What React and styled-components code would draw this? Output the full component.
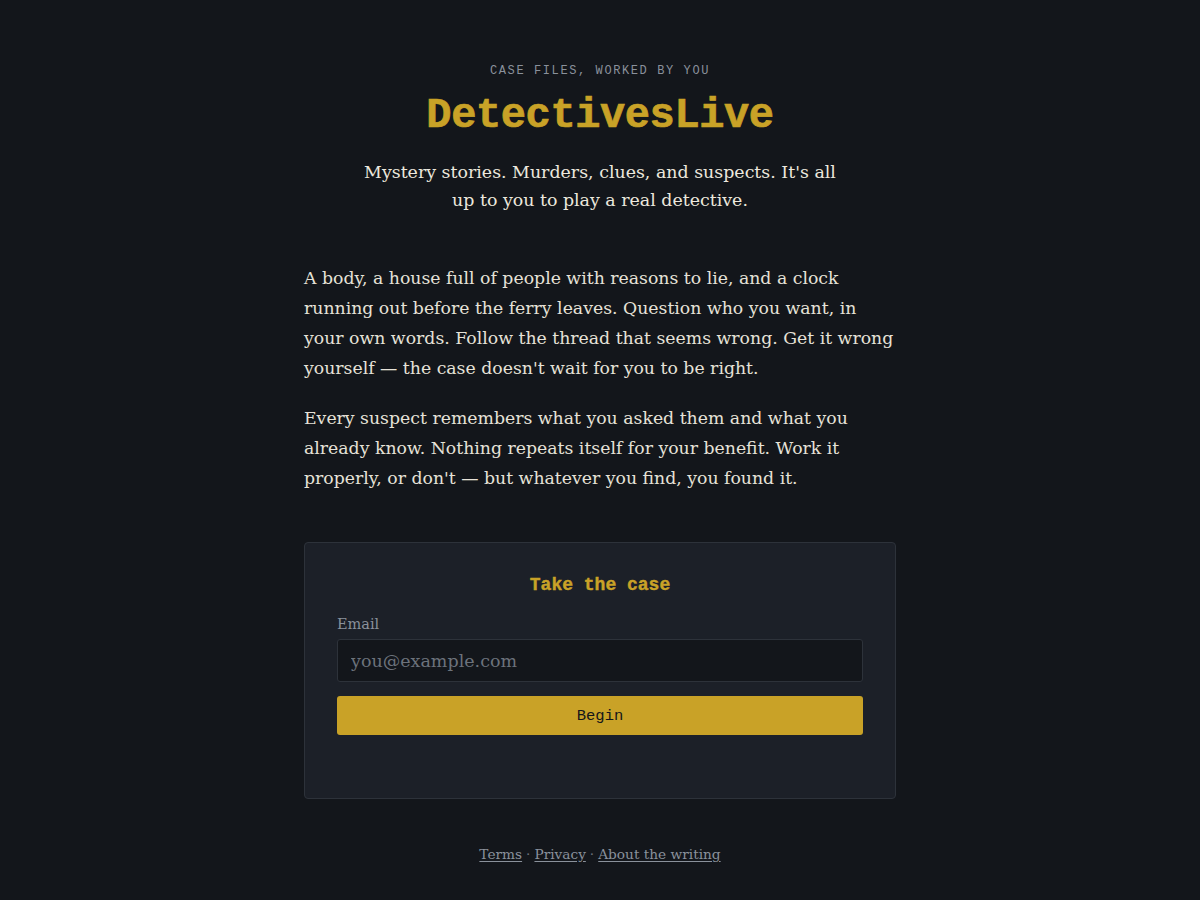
import React from 'react'
import styled, { createGlobalStyle } from 'styled-components'

const serif = `"DejaVu Serif", "Liberation Serif", serif`
const mono = `"Liberation Mono", "DejaVu Sans Mono", monospace`

const GlobalStyle = createGlobalStyle`
  html, body {
    margin: 0;
    padding: 0;
    background: #13161b;
  }
  body {
    font-family: ${serif};
    color: #e6e2d8;
  }
  * { box-sizing: border-box; }
`

export default () => (
  <>
    <GlobalStyle />
    <Page>
      <Header>
        <Kicker>Case files, worked by you</Kicker>
        <Title>DetectivesLive</Title>
        <Tagline>
          Mystery stories. Murders, clues, and suspects. It's all up to you to play a real detective.
        </Tagline>
      </Header>

      <Intro>
        <Para>
          A body, a house full of people with reasons to lie, and a clock running out before the ferry
          leaves. Question who you want, in your own words. Follow the thread that seems wrong. Get it
          wrong yourself — the case doesn't wait for you to be right.
        </Para>
        <Para>
          Every suspect remembers what you asked them and what you already know. Nothing repeats itself
          for your benefit. Work it properly, or don't — but whatever you find, you found it.
        </Para>
      </Intro>

      <Card>
        <CardTitle>Take the case</CardTitle>
        <Field>
          <Label htmlFor="email">Email</Label>
          <Input id="email" type="email" placeholder="you@example.com" />
        </Field>
        <Button type="button">Begin</Button>
      </Card>

      <Footer>
        <FootLink href="#">Terms</FootLink>
        <Dot>·</Dot>
        <FootLink href="#">Privacy</FootLink>
        <Dot>·</Dot>
        <FootLink href="#">About the writing</FootLink>
      </Footer>
    </Page>
  </>
)

const Page = styled.main`
  width: 592px;
  margin: 0 auto;
  padding: 62px 0 36px;
  display: flex;
  flex-direction: column;
`
const Header = styled.header`
  display: flex;
  flex-direction: column;
  align-items: center;
  text-align: center;
`
const Kicker = styled.div`
  font-family: ${mono};
  font-size: 12px;
  letter-spacing: 1.6px;
  text-transform: uppercase;
  color: #8a919b;
  line-height: 18px;
`
const Title = styled.h1`
  margin: 10px 0 0;
  font-family: ${mono};
  font-weight: 700;
  font-size: 42px;
  letter-spacing: -0.4px;
  line-height: 52px;
  color: #c9a227;
  -webkit-text-stroke: 0.7px #c9a227;
`
const Tagline = styled.p`
  margin: 16px 0 0;
  width: 490px;
  font-size: 17.4px;
  line-height: 28px;
  color: #ece8de;
`
const Intro = styled.section`
  margin-top: 49px;
`
const Para = styled.p`
  margin: 0 0 20px;
  font-size: 17.3px;
  line-height: 30px;
  color: #e6e2d8;
`
const Card = styled.section`
  margin-top: 29px;
  background: #1c2028;
  border: 1px solid #2d323a;
  border-radius: 4px;
  padding: 28px 32px 63px;
  display: flex;
  flex-direction: column;
`
const CardTitle = styled.h2`
  margin: 0 0 16px;
  text-align: center;
  font-family: ${mono};
  font-weight: 700;
  font-size: 18px;
  line-height: 28px;
  color: #c9a227;
  -webkit-text-stroke: 0.4px #c9a227;
`
const Field = styled.div`
  display: flex;
  flex-direction: column;
  gap: 6px;
  margin-bottom: 14px;
`
const Label = styled.label`
  font-size: 14.5px;
  line-height: 18px;
  color: #8a919b;
`
const Input = styled.input`
  height: 43px;
  padding: 0 13px;
  background: #13161b;
  border: 1px solid #2d323a;
  border-radius: 3px;
  font-family: ${serif};
  font-size: 17.5px;
  color: #e6e2d8;
  outline: none;

  &::placeholder {
    color: #6c727b;
  }
`
const Button = styled.button`
  height: 39px;
  border: none;
  border-radius: 3px;
  background: #c9a227;
  color: #14161a;
  font-family: ${mono};
  font-size: 15.5px;
  cursor: pointer;
`
const Footer = styled.footer`
  margin-top: 47px;
  display: flex;
  justify-content: center;
  align-items: baseline;
  gap: 4px;
  font-size: 13.7px;
  color: #8a919b;
`
const FootLink = styled.a`
  color: #8a919b;
  text-decoration: underline;
  text-underline-offset: 2px;
`
const Dot = styled.span`
  color: #6c727b;
`
